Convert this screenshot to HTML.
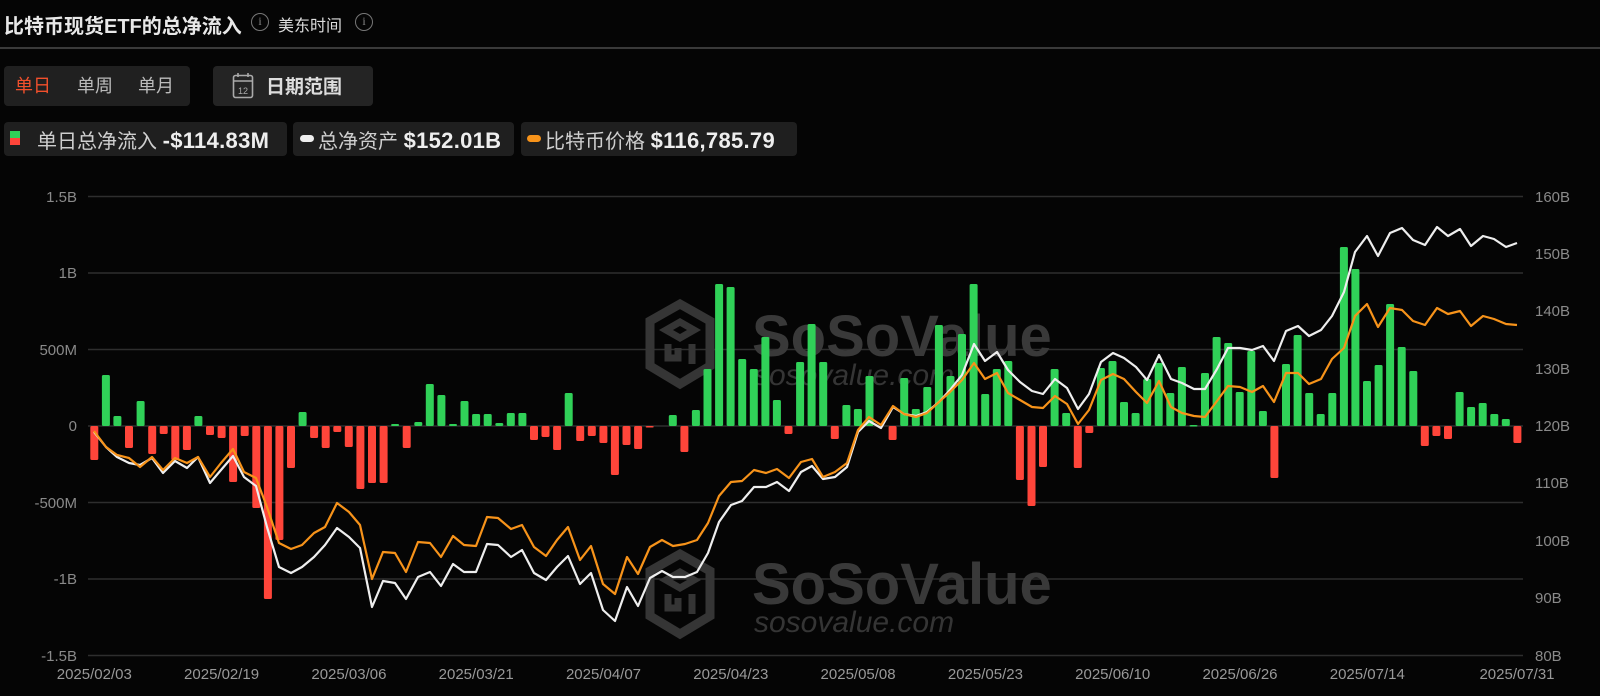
<!DOCTYPE html>
<html><head><meta charset="utf-8">
<style>
*{margin:0;padding:0;box-sizing:border-box}
body{width:1600px;height:696px;background:#050505;overflow:hidden;font-family:"Liberation Sans","Noto Sans CJK SC",sans-serif;color:#ddd;position:relative}
.abs{position:absolute;white-space:nowrap}
.title{left:4px;top:10px;font-size:20px;font-weight:bold;color:#e8e8e8}
.info{width:18px;height:18px;border:1.5px solid #777;border-radius:50%;font-size:12px;color:#888;text-align:center;line-height:15px;font-family:"Liberation Serif",serif}
.hr{left:0;top:47px;width:1600px;height:2px;background:#3a3a3a}
.grp{left:4px;top:66px;width:186px;height:40px;background:#202020;border-radius:4px}
.tab{top:72px;font-size:18px;color:#bbb}
.date{left:213px;top:66px;width:160px;height:40px;background:#242424;border-radius:4px}
.chip{top:122px;height:34px;background:#1f1f1f;border-radius:4px}
.lg{top:125px;font-size:20px;color:#cfcfcf}
.lg b{color:#eee;font-size:22px;letter-spacing:0.3px}
</style></head><body>
<div class="abs title">比特币现货ETF的总净流入</div>
<div class="abs info" style="left:251px;top:13px">i</div>
<div class="abs" style="left:278px;top:12px;font-size:16px;color:#ddd">美东时间</div>
<div class="abs info" style="left:355px;top:13px">i</div>
<div class="abs hr"></div>
<div class="abs grp"></div>
<div class="abs tab" style="left:15px;color:#f2502c">单日</div>
<div class="abs tab" style="left:77px">单周</div>
<div class="abs tab" style="left:138px">单月</div>
<div class="abs date"></div>
<svg class="abs" style="left:232px;top:72px" width="22" height="27" viewBox="0 0 22 27"><rect x="1.5" y="3.5" width="19" height="22" rx="2" fill="none" stroke="#aaa" stroke-width="1.6"/><line x1="1.5" y1="9" x2="20.5" y2="9" stroke="#aaa" stroke-width="1.6"/><line x1="6" y1="1" x2="6" y2="5" stroke="#aaa" stroke-width="1.6"/><line x1="16" y1="1" x2="16" y2="5" stroke="#aaa" stroke-width="1.6"/><text x="11" y="22" font-size="9" fill="#aaa" text-anchor="middle" font-family="Liberation Sans">12</text></svg>
<div class="abs" style="left:266px;top:72px;font-size:19px;font-weight:bold;color:#ddd">日期范围</div>

<div class="abs chip" style="left:4px;width:283px"></div>
<div class="abs" style="left:10px;top:131px;width:10px;height:7px;background:#30d158"></div>
<div class="abs" style="left:10px;top:138px;width:10px;height:7px;background:#ff453a"></div>
<div class="abs lg" style="left:37px">单日总净流入 <b>-$114.83M</b></div>
<div class="abs chip" style="left:293px;width:221px"></div>
<div class="abs" style="left:300px;top:135px;width:14px;height:7px;background:#eee;border-radius:4px"></div>
<div class="abs lg" style="left:318px">总净资产 <b>$152.01B</b></div>
<div class="abs chip" style="left:521px;width:276px"></div>
<div class="abs" style="left:527px;top:135px;width:14px;height:7px;background:#f7931a;border-radius:4px"></div>
<div class="abs lg" style="left:545px">比特币价格 <b>$116,785.79</b></div>

<svg class="abs" style="left:0;top:0" width="1600" height="696" id="ch">
<g stroke="#2e2e2e" stroke-width="1.5">
<line x1="88" x2="1523" y1="196.5" y2="196.5"/><line x1="88" x2="1523" y1="273" y2="273"/><line x1="88" x2="1523" y1="349.5" y2="349.5"/><line x1="88" x2="1523" y1="426" y2="426"/><line x1="88" x2="1523" y1="502.5" y2="502.5"/><line x1="88" x2="1523" y1="579" y2="579"/><line x1="88" x2="1523" y1="655.5" y2="655.5"/>
</g>
<g font-family="Liberation Sans" font-size="15" fill="#8a8a8a" text-anchor="end">
<text x="77" y="202">1.5B</text><text x="77" y="278">1B</text><text x="77" y="355">500M</text><text x="77" y="431">0</text><text x="77" y="508">-500M</text><text x="77" y="584">-1B</text><text x="77" y="661">-1.5B</text>
</g>
<g font-family="Liberation Sans" font-size="15" fill="#8a8a8a">
<text x="1535" y="202">160B</text><text x="1535" y="259">150B</text><text x="1535" y="316">140B</text><text x="1535" y="374">130B</text><text x="1535" y="431">120B</text><text x="1535" y="488">110B</text><text x="1535" y="546">100B</text><text x="1535" y="603">90B</text><text x="1535" y="661">80B</text>
</g>
<g font-family="Liberation Sans" font-size="15" fill="#999" text-anchor="middle" id="dates"></g>
<g id="wm" fill="#333" stroke="none">
<g transform="translate(646,300)"><polygon points="34,4 64,21 64,66 34,84 4,66 4,21" fill="none" stroke="#353535" stroke-width="9"/><path d="M20,30 L34,22 L48,30 L34,38 Z M22,44 v14 h10 v-10 M46,44 v20" fill="none" stroke="#353535" stroke-width="7"/></g>
<text x="752" y="356" font-size="58" font-weight="bold" font-family="Liberation Sans" fill="#393939">SoSoValue</text>
<text x="754" y="385" font-size="30" font-style="italic" font-family="Liberation Sans" fill="#353535">sosovalue.com</text>
<g transform="translate(646,550)"><polygon points="34,4 64,21 64,66 34,84 4,66 4,21" fill="none" stroke="#353535" stroke-width="9"/><path d="M20,30 L34,22 L48,30 L34,38 Z M22,44 v14 h10 v-10 M46,44 v20" fill="none" stroke="#353535" stroke-width="7"/></g>
<text x="752" y="604" font-size="58" font-weight="bold" font-family="Liberation Sans" fill="#393939">SoSoValue</text>
<text x="754" y="632" font-size="30" font-style="italic" font-family="Liberation Sans" fill="#353535">sosovalue.com</text>
</g>
<g id="bars"></g>
<polyline id="wl" fill="none" stroke="#eeeeee" stroke-width="2.2" stroke-linejoin="round" points="94,432 106,447 117,457 129,463 140,465 152,458 163,473 175,461 187,468 198,457 210,483 221,470 233,456 244,477 256,486 267,527 279,567 291,573 302,567 314,557 325,545 337,528 349,537 360,548 372,607 383,581 395,583 406,599 418,577 430,572 441,586 453,564 464,572 476,572 487,544 498,545 511,557 522,550 534,573 546,580 557,567 568,556 580,584 591,573 603,610 615,621 627,587 638,606 650,578 662,571 673,577 685,577 697,572 708,553 719,522 731,505 742,501 754,487 766,487 777,482 789,491 801,472 812,466 823,479 835,477 847,467 858,432 869,421 881,428 893,407 904,414 916,416 927,412 939,402 950,390 962,375 974,344 985,361 997,352 1008,370 1020,382 1032,391 1043,394 1055,379 1067,388 1078,409 1089,394 1101,362 1113,353 1124,358 1136,367 1147,380 1159,355 1171,379 1182,383 1194,389 1205,389 1217,369 1228,348 1240,348 1252,350 1263,346 1274,361 1286,331 1298,326 1309,336 1321,330 1332,316 1344,292 1355,252 1367,236 1378,256 1390,233 1402,228 1413,240 1425,245 1437,227 1448,236 1460,229 1471,246 1483,236 1494,239 1506,247 1517,243"/>
<polyline fill="none" stroke="#f7931a" stroke-width="2.2" stroke-linejoin="round" points="94,431 106,447 117,455 129,458 140,467 152,457 163,470 175,458 187,463 198,457 210,477 221,463 233,449 244,472 256,478 267,507 279,543 291,549 302,545 314,533 325,527 337,503 349,512 360,525 372,579 383,552 395,553 406,572 418,542 430,543 441,557 453,536 464,545 476,546 487,517 498,518 511,529 522,525 534,547 546,556 557,540 568,527 580,560 591,546 603,584 615,594 627,557 638,574 650,547 662,540 673,546 685,544 697,540 708,523 719,496 731,482 742,481 754,470 766,473 777,469 789,478 801,462 812,459 823,477 835,472 847,463 858,430 869,417 881,425 893,406 904,414 916,417 927,413 939,402 950,392 962,380 974,363 985,379 997,373 1008,393 1020,400 1032,407 1043,408 1055,396 1067,404 1078,424 1089,410 1101,380 1113,374 1124,379 1136,392 1147,403 1159,381 1171,407 1182,413 1194,416 1205,417 1217,401 1228,386 1240,387 1252,392 1263,386 1274,402 1286,373 1298,373 1309,384 1321,379 1332,359 1344,348 1355,316 1367,304 1378,327 1390,308 1402,310 1413,321 1425,325 1437,308 1448,314 1460,311 1471,326 1483,316 1494,319 1506,324 1517,325"/>
</svg>
<script>
var v=[-34,51,10,-22,25,-28,-8,-34,-24,10,-9,-12,-56,-10,-82,-173,-114,-42,14,-12,-22,-6,-21,-63,-57,-57,2,-22,4,42,31,2,25,12,12,3,13,13,-14,-11,-24,33,-15,-10,-17,-49,-19,-23,-1,0,11,-26,16,57,142,139,67,57,89,26,-8,64,102,64,-13,21,17,50,0,-14,48,17,39,101,50,92,142,32,57,65,-54,-80,-41,57,13,-42,-7,58,65,24,13,47,63,33,59,1,53,89,83,34,75,15,-52,62,91,33,12,33,179,157,45,61,122,79,55,-20,-10,-13,34,19,23,12,7,-17];
var g=document.getElementById("bars"),s="";
for(var i=0;i<v.length;i++){var x=94.3+11.57*i,h=v[i];if(h===0)continue;var y=h>0?426-h:426;s+='<rect x="'+(x-4).toFixed(1)+'" y="'+y+'" width="8" height="'+Math.max(Math.abs(h),1.5)+'" rx="1.5" fill="'+(h>0?'#30d158':'#ff453a')+'"/>';}
g.innerHTML=s;
var d=["2025/02/03","2025/02/19","2025/03/06","2025/03/21","2025/04/07","2025/04/23","2025/05/08","2025/05/23","2025/06/10","2025/06/26","2025/07/14"],t="";
for(var k=0;k<d.length;k++){t+='<text x="'+(94.3+127.3*k)+'" y="679">'+d[k]+'</text>';}
t+='<text x="1517" y="679">2025/07/31</text>';
document.getElementById("dates").innerHTML=t;
</script>
</body></html>
